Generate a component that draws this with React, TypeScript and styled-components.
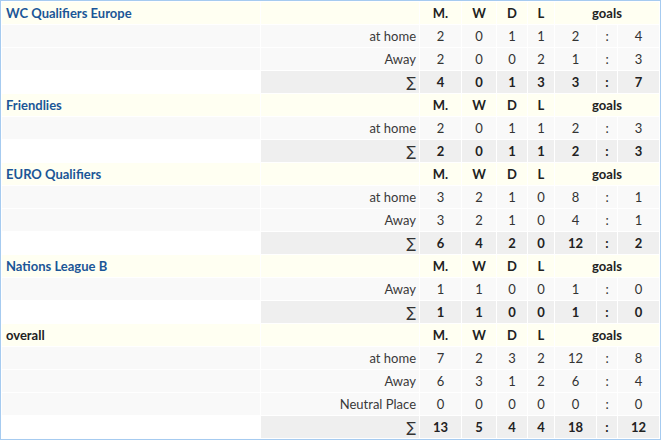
import React from "react";
import styled, { createGlobalStyle } from "styled-components";

const Global = createGlobalStyle`
  html, body { margin: 0; padding: 0; background: #fff; }
  body { font-family: Lato, "Open Sans", sans-serif; }
`;

const Table = styled.div`
  width: 661px;
  box-sizing: border-box;
  border: 1px solid #a6cbf0;
  padding: 1px;
  display: grid;
  grid-template-columns: 258px 158px 41px 34px 30px 26px 41px 20px 41px;
  grid-auto-rows: 22px;
  gap: 1px;
  background: #fff;
  font-size: 13px;
  color: #333;
`;

type Kind = "head" | "data" | "sum";

const bg: Record<Kind, string> = {
  head: "#fffff2",
  data: "#f9f9f9",
  sum: "#efefef",
};

const Cell = styled.div<{ $kind: Kind; $span?: number; $blank?: boolean }>`
  background: ${(p) => (p.$blank ? "#fff" : bg[p.$kind])};
  grid-column: span ${(p) => p.$span ?? 1};
  line-height: 22px;
  text-align: center;
  font-weight: ${(p) => (p.$kind === "data" ? 400 : 700)};
  color: ${(p) => (p.$kind === "data" ? "#333" : "#222")};
  white-space: nowrap;
  overflow: hidden;
`;

const Title = styled(Cell)<{ $link: boolean }>`
  text-align: left;
  padding-left: 4px;
  color: ${(p) => (p.$link ? "#1b5697" : "#222")};
`;

const Label = styled(Cell)`
  text-align: right;
  padding-right: 3px;
  font-weight: 400;
  color: #3a3a3a;
`;

const Sigma = styled(Label)`
  font-family: "DejaVu Sans", sans-serif;
  font-size: 14px;
  color: #333;
`;

type Line = { label: string; v: [number, number, number, number, number, number] };
type Section = { title: string; link: boolean; rows: Line[]; sum: Line["v"] };

const data: Section[] = [
  {
    title: "WC Qualifiers Europe",
    link: true,
    rows: [
      { label: "at home", v: [2, 0, 1, 1, 2, 4] },
      { label: "Away", v: [2, 0, 0, 2, 1, 3] },
    ],
    sum: [4, 0, 1, 3, 3, 7],
  },
  {
    title: "Friendlies",
    link: true,
    rows: [{ label: "at home", v: [2, 0, 1, 1, 2, 3] }],
    sum: [2, 0, 1, 1, 2, 3],
  },
  {
    title: "EURO Qualifiers",
    link: true,
    rows: [
      { label: "at home", v: [3, 2, 1, 0, 8, 1] },
      { label: "Away", v: [3, 2, 1, 0, 4, 1] },
    ],
    sum: [6, 4, 2, 0, 12, 2],
  },
  {
    title: "Nations League B",
    link: true,
    rows: [{ label: "Away", v: [1, 1, 0, 0, 1, 0] }],
    sum: [1, 1, 0, 0, 1, 0],
  },
  {
    title: "overall",
    link: false,
    rows: [
      { label: "at home", v: [7, 2, 3, 2, 12, 8] },
      { label: "Away", v: [6, 3, 1, 2, 6, 4] },
      { label: "Neutral Place", v: [0, 0, 0, 0, 0, 0] },
    ],
    sum: [13, 5, 4, 4, 18, 12],
  },
];

function Values({ v, kind }: { v: Line["v"]; kind: Kind }) {
  return (
    <>
      <Cell $kind={kind}>{v[0]}</Cell>
      <Cell $kind={kind}>{v[1]}</Cell>
      <Cell $kind={kind}>{v[2]}</Cell>
      <Cell $kind={kind}>{v[3]}</Cell>
      <Cell $kind={kind}>{v[4]}</Cell>
      <Cell $kind={kind}>:</Cell>
      <Cell $kind={kind}>{v[5]}</Cell>
    </>
  );
}

function Block({ s }: { s: Section }) {
  return (
    <>
      <Title $kind="head" $link={s.link}>{s.title}</Title>
      <Cell $kind="head" />
      <Cell $kind="head">M.</Cell>
      <Cell $kind="head">W</Cell>
      <Cell $kind="head">D</Cell>
      <Cell $kind="head">L</Cell>
      <Cell $kind="head" $span={3}>goals</Cell>
      {s.rows.map((r) => (
        <React.Fragment key={r.label}>
          <Cell $kind="data" />
          <Label $kind="data">{r.label}</Label>
          <Values v={r.v} kind="data" />
        </React.Fragment>
      ))}
      <Cell $kind="sum" $blank />
      <Sigma $kind="sum">∑</Sigma>
      <Values v={s.sum} kind="sum" />
    </>
  );
}

export default function App() {
  return (
    <>
      <Global />
      <Table>
        {data.map((s) => (
          <Block key={s.title} s={s} />
        ))}
      </Table>
    </>
  );
}
